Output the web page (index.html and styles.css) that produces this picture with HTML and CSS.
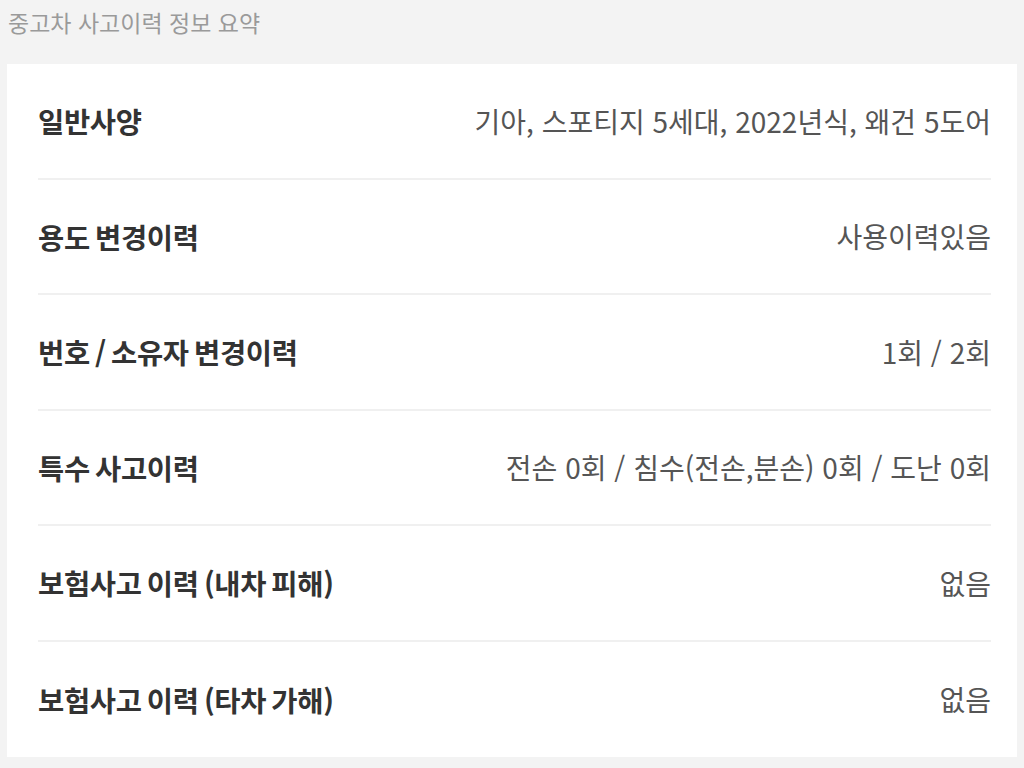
FILE: index.html
```html
<!DOCTYPE html>
<html lang="ko">
<head>
<meta charset="utf-8">
<title>중고차 사고이력 정보 요약</title>
<link rel="stylesheet" href="styles.css">
</head>
<body>
<div class="page">
  <h1 class="title">중고차 사고이력 정보 요약</h1>
  <div class="card">
    <div class="row"><span class="label">일반사양</span><span class="value">기아, 스포티지 5세대, 2022년식, 왜건 5도어</span></div>
    <div class="row"><span class="label">용도 변경이력</span><span class="value">사용이력있음</span></div>
    <div class="row"><span class="label">번호 / 소유자 변경이력</span><span class="value">1회 / 2회</span></div>
    <div class="row"><span class="label">특수 사고이력</span><span class="value">전손 0회 / 침수(전손,분손) 0회 / 도난 0회</span></div>
    <div class="row"><span class="label">보험사고 이력 (내차 피해)</span><span class="value">없음</span></div>
    <div class="row"><span class="label">보험사고 이력 (타차 가해)</span><span class="value">없음</span></div>
  </div>
</div>
</body>
</html>
```

FILE: styles.css
```css
html, body {
  margin: 0;
  padding: 0;
  background: #f3f3f3;
}
body {
  font-family: "Noto Sans CJK KR", "Noto Sans", sans-serif;
}
.page {
  padding: 0 7px 11px 7px;
}
.title {
  margin: 0;
  height: 64px;
  padding: 3px 0 0 1px;
  box-sizing: border-box;
  font-size: 23px;
  font-weight: 400;
  color: #9a9a9a;
  line-height: 38px;
}
.card {
  background: #fff;
  padding: 0 26px 0 31px;
}
.row {
  display: flex;
  justify-content: space-between;
  align-items: center;
  height: 115.5px;
  box-sizing: border-box;
  border-bottom: 2px solid #f0f0f0;
}
.row:last-child {
  border-bottom: none;
}
.label {
  font-size: 28.5px;
  font-weight: 700;
  color: #333;
  letter-spacing: -0.3px;
  word-spacing: -2.5px;
}
.value {
  font-size: 28px;
  font-weight: 400;
  color: #555;
}
```
